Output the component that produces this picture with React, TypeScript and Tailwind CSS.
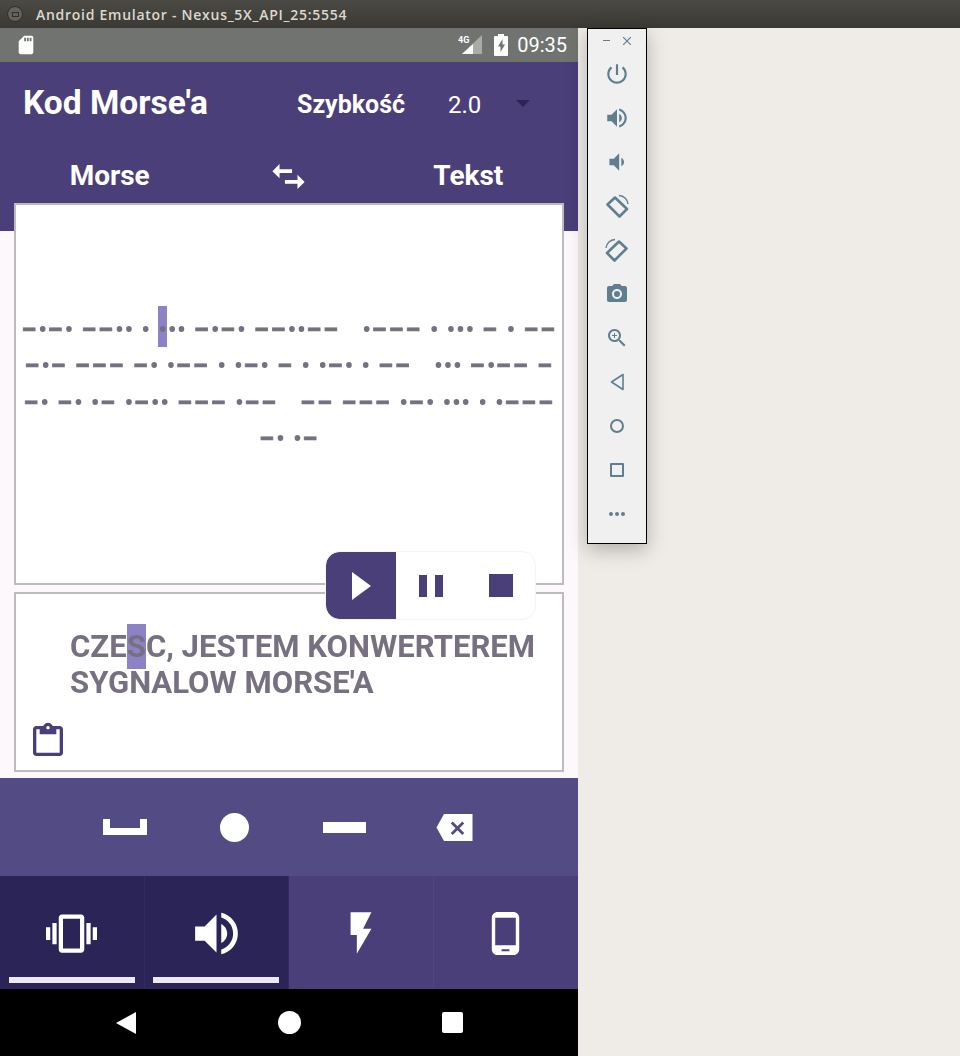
import { FC, Fragment, ReactNode } from 'react'

interface IconProps {
  d: string
  className?: string
}

const Icon: FC<IconProps> = ({ d, className }) => (
  <svg viewBox="0 0 24 24" className={className} fill="currentColor">
    <path d={d} />
  </svg>
)

const paths = {
  sd: 'M18 2h-8L4.02 8 4 20c0 1.1.9 2 2 2h12c1.1 0 2-.9 2-2V4c0-1.1-.9-2-2-2zm-6 6h-2V4h2v4zm3 0h-2V4h2v4zm3 0h-2V4h2v4z',
  swap: 'M7 5L3 9l4 4v-3h7V8H7V5zM21 15l-4-4v3h-7v2h7v3l4-4z',
  clipboard:
    'M19 3h-4.18C14.4 1.84 13.3 1 12 1c-1.3 0-2.4.84-2.82 2H5c-1.1 0-2 .9-2 2v14c0 1.1.9 2 2 2h14c1.1 0 2-.9 2-2V5c0-1.1-.9-2-2-2zm-7 0c.55 0 1 .45 1 1s-.45 1-1 1-1-.45-1-1 .45-1 1-1zm7 16H5V5h2v3h10V5h2v14z',
  vibration:
    'M0 15h2V9H0v6zm3 2h2V7H3v10zm19-8v6h2V9h-2zm-3 8h2V7h-2v10zM16.5 3h-9C6.67 3 6 3.67 6 4.5v15c0 .83.67 1.5 1.5 1.5h9c.83 0 1.5-.67 1.5-1.5v-15c0-.83-.67-1.5-1.5-1.5zM16 19H8V5h8v14z',
  volume:
    'M3 9v6h4l5 5V4L7 9H3zm13.5 3c0-1.77-1.02-3.29-2.5-4.03v8.05c1.48-.73 2.5-2.25 2.5-4.02zM14 3.23v2.06c2.89.86 5 3.54 5 6.71s-2.11 5.85-5 6.71v2.06c4.01-.91 7-4.49 7-8.77s-2.99-7.86-7-8.77z',
  volumeDown:
    'M18.5 12c0-1.77-1.02-3.29-2.5-4.03v8.05c1.48-.73 2.5-2.25 2.5-4.02zM5 9v6h4l5 5V4L9 9H5z',
  flash: 'M7 2v11h3v9l7-12h-4l4-8z',
  phone:
    'M16 1H8C6.34 1 5 2.34 5 4v16c0 1.66 1.34 3 3 3h8c1.66 0 3-1.34 3-3V4c0-1.66-1.34-3-3-3zm-2 20h-4v-1h4v1zm3.25-3H6.75V4h10.5v14z',
  power:
    'M13 3h-2v10h2V3zm4.83 2.17l-1.42 1.42C17.99 7.86 19 9.81 19 12c0 3.87-3.13 7-7 7s-7-3.13-7-7c0-2.19 1.01-4.14 2.58-5.42L6.17 5.17C4.23 6.82 3 9.26 3 12c0 4.97 4.03 9 9 9s9-4.03 9-9c0-2.74-1.23-5.18-3.17-6.83z',
  camera:
    'M9 2L7.17 4H4c-1.1 0-2 .9-2 2v12c0 1.1.9 2 2 2h16c1.1 0 2-.9 2-2V6c0-1.1-.9-2-2-2h-3.17L15 2H9zm3 15c-2.76 0-5-2.24-5-5s2.24-5 5-5 5 2.24 5 5-2.24 5-5 5zm0-2a3 3 0 100-6 3 3 0 000 6z',
  zoom:
    'M15.5 14h-.79l-.28-.27C15.41 12.59 16 11.11 16 9.5 16 5.91 13.09 3 9.5 3S3 5.91 3 9.5 5.91 16 9.5 16c1.61 0 3.09-.59 4.23-1.57l.27.28v.79l5 4.99L20.49 19l-4.99-5zm-6 0C7.01 14 5 11.99 5 9.5S7.01 5 9.5 5 14 7.01 14 9.5 11.99 14 9.5 14zM12 10h-2v2H9v-2H7V9h2V7h1v2h2v1z',
}

const Highlight: FC<{ className?: string; children: ReactNode }> = ({ className = 'py-[4px]', children }) => (
  <span className={`bg-[#8d82c6] ${className}`}>{children}</span>
)

// minus runs get a stroke so they come out as thick as the dots, dots stay regular weight
const Morse: FC<{ text: string }> = ({ text }) => (
  <>
    {text.split(/(−+)/).map((part, i) =>
      part.startsWith('−') ? (
        <span
          key={i}
          className="font-bold tracking-[1.3px] [-webkit-text-stroke:0.8px_#767080]"
        >
          {part}
        </span>
      ) : (
        <Fragment key={i}>{part}</Fragment>
      )
    )}
  </>
)

const MorseRow: FC<{ children: ReactNode }> = ({ children }) => (
  <p className="whitespace-pre text-center text-[28px] font-normal leading-[36.4px] text-[#767080] [word-spacing:0.45px] [will-change:transform]">
    {children}
  </p>
)

const ToolIcon: FC<{ d: string; size?: string }> = ({ d, size = 'h-[24px] w-[24px]' }) => (
  <div className="flex h-[44px] items-center justify-center text-[#5f7f8f]">
    <Icon d={d} className={size} />
  </div>
)

const RotateIcon: FC<{ className?: string }> = ({ className }) => (
  <div className="flex h-[44px] items-center justify-center text-[#5f7f8f]">
    <svg viewBox="0 0 24 24" className={`h-[24px] w-[24px] ${className ?? ''}`} fill="none" stroke="currentColor">
      <path d="M2.5 10.5L10 3.5l12 11.5-7.5 7.5z" strokeWidth="2.6" strokeLinejoin="round" />
      <path d="M14 1.5a9.5 9.5 0 019 8.5" strokeWidth="1.4" />
    </svg>
  </div>
)

const Tab: FC<{ active?: boolean; children: ReactNode }> = ({ active, children }) => (
  <div
    className={`flex flex-col items-center border-r last:border-r-0 ${active ? 'border-[#322b5e] bg-[#2b2557]' : 'border-[#51477f] bg-[#4a3f78]'}`}
  >
    <div className="flex h-[101px] w-full items-center justify-center pt-[13px] text-white">
      {children}
    </div>
    <div className={`h-[6px] w-[126px] ${active ? 'bg-[#eee8f4]' : ''}`} />
  </div>
)

export default function App() {
  return (
    <div className="h-[1056px] w-[960px] overflow-hidden bg-[#efebe6] font-[Roboto,sans-serif]">
      {/* window title bar */}
      <div className="flex h-[28px] items-center bg-gradient-to-b from-[#4b4a45] to-[#3a3934] pl-[7px]">
        <div className="flex h-[16px] w-[16px] items-center justify-center rounded-full border border-[#2f2e2a] bg-[#64625d]">
          <div className="h-[5px] w-[7px] border border-[#2f2e2a]" />
        </div>
        <span className="ml-[13px] font-['Open_Sans',sans-serif] text-[14px] font-semibold tracking-[0.73px] text-[#dcd8cf]">
          Android Emulator - Nexus_5X_API_25:5554
        </span>
      </div>

      <div className="flex">
        {/* phone screen */}
        <div className="flex h-[1028px] w-[578px] flex-col bg-[#fdf8fc]">
          <div className="flex h-[34px] items-center bg-[#70736f] pl-[15px] pr-[11px] text-white">
            <Icon d={paths.sd} className="h-[24px] w-[22px]" />
            <div className="ml-auto flex items-center">
              <svg viewBox="0 0 26 22" className="h-[22px] w-[26px]">
                <path d="M24 1v19H4z" fill="#a9aba8" />
                <path d="M15 10v10H4z" fill="#ffffff" />
                <text x="0" y="9" fontSize="9" fontWeight="700" fill="#ffffff">4G</text>
              </svg>
              <svg viewBox="0 0 14 22" className="ml-[10px] h-[22px] w-[14px]" fill="#ffffff">
                <path
                  fillRule="evenodd"
                  d="M4 0h6v2h3a1 1 0 011 1v18a1 1 0 01-1 1H1a1 1 0 01-1-1V3a1 1 0 011-1h3V0zm4.5 5L4 12.5h2.5V18l4.5-7.5H8.5V5z"
                />
              </svg>
              <span className="ml-[9px] text-[20px] leading-none">09:35</span>
            </div>
          </div>

          {/* header */}
          <div className="h-[169px] shrink-0 bg-[#4a3f78] text-white">
            <div className="flex h-[82px] items-center pl-[23px]">
              <h1 className="w-[274px] text-[33.5px] font-bold">Kod Morse'a</h1>
              <span className="w-[151px] pt-[4px] text-[25px] font-bold">Szybkość</span>
              <span className="w-[68px] pt-[4px] text-[24px]">2.0</span>
              <div className="h-0 w-0 border-x-[7px] border-t-[7px] border-x-transparent border-t-[#2b2557]" />
            </div>
            <div className="grid grid-cols-3 px-[20px] pt-[2px]">
              <span className="text-center text-[28px] font-bold leading-[60px]">Morse</span>
              <div className="flex items-center justify-center">
                <Icon d={paths.swap} className="h-[43px] w-[43px]" />
              </div>
              <span className="text-center text-[28px] font-bold leading-[60px]">Tekst</span>
            </div>
          </div>

          {/* morse panel */}
          <div className="relative mx-[14px] -mt-[28px] h-[382px] shrink-0 border-2 border-[#bdbbc0] bg-white pt-[107px]">
            <MorseRow>
              <Morse text="−•−• −−•• • " />
              <Highlight className="pb-[1px] pt-[7px]">•</Highlight>
              <Morse text="•• −•−• −−••−−   •−−− • ••• − • −−" />
            </MorseRow>
            <MorseRow>
              <Morse text="−•− −−− −• •−− • •−• − • •−• • −−   ••• −•−− −" />
            </MorseRow>
            <MorseRow>
              <Morse text="−• −• •− •−•• −−− •−−   −− −−− •−• ••• • •−−−" />
            </MorseRow>
            <MorseRow>
              <Morse text="−• •−" />
            </MorseRow>
          </div>

          {/* text panel */}
          <div className="relative mx-[14px] mt-[7px] h-[180px] shrink-0 border-2 border-[#bdbbc0] bg-white pl-[54px] pt-[35px]">
            <p className="text-[31.1px] font-bold leading-[36.4px] text-[#767080] [will-change:transform]">
              CZE<Highlight>S</Highlight>C, JESTEM KONWERTEREM
              <br />
              SYGNALOW MORSE'A
            </p>
            <Icon d={paths.clipboard} className="absolute bottom-[9px] left-[12px] h-[40px] w-[40px] text-[#4a3f78]" />
          </div>

          {/* player controls */}
          <div className="relative z-10 h-0">
            <div className="absolute left-[325px] top-[-221px] flex h-[69px] w-[211px] overflow-hidden rounded-[14px] border border-[#f6f3f7] bg-white text-[#4a3f78]">
              <div className="flex w-[70px] items-center justify-center rounded-l-[14px] bg-[#4a3f78] text-white">
                <div className="h-0 w-0 border-y-[14px] border-l-[19px] border-y-transparent border-l-white" />
              </div>
              <div className="flex flex-1 items-center justify-center gap-[8px]">
                <div className="h-[22px] w-[8px] bg-[#4a3f78]" />
                <div className="h-[22px] w-[8px] bg-[#4a3f78]" />
              </div>
              <div className="flex w-[70px] items-center justify-center pl-[2px]">
                <div className="h-[23px] w-[24px] bg-[#4a3f78]" />
              </div>
            </div>
          </div>

          {/* keypad */}
          <div className="mt-[6px] flex h-[98px] shrink-0 items-center bg-[#534c84] pl-[103px] text-white">
            <div className="h-[16px] w-[44px] border-x-[7px] border-b-[7px] border-white" />
            <div className="ml-[73px] h-[29px] w-[29px] rounded-full bg-white" />
            <div className="ml-[74px] h-[11px] w-[43px] bg-white" />
            <svg viewBox="0 0 24 18" className="ml-[70px] h-[27px] w-[37px]" fill="currentColor">
              <path
                fillRule="evenodd"
                d="M24 0H5L0 9l5 9h19V0zm-5.5 12.7L17.2 14 14 10.8 10.8 14l-1.3-1.3L12.7 9.5 9.5 6.3 10.8 5 14 8.2 17.2 5l1.3 1.3-3.2 3.2 3.2 3.2z"
              />
            </svg>
          </div>

          {/* output tabs */}
          <div className="grid h-[113px] shrink-0 grid-cols-4">
            <Tab active>
              <Icon d={paths.vibration} className="h-[51px] w-[51px]" />
            </Tab>
            <Tab active>
              <Icon d={paths.volume} className="h-[57px] w-[57px]" />
            </Tab>
            <Tab>
              <Icon d={paths.flash} className="h-[50px] w-[50px]" />
            </Tab>
            <Tab>
              <Icon d={paths.phone} className="h-[47px] w-[47px]" />
            </Tab>
          </div>

          {/* android nav bar */}
          <div className="relative flex h-[67px] shrink-0 items-center bg-black">
            <div className="ml-[116px] h-0 w-0 border-y-[11px] border-r-[20px] border-y-transparent border-r-white" />
            <div className="ml-[142px] h-[23px] w-[23px] rounded-full bg-white" />
            <div className="ml-[141px] h-[21px] w-[21px] rounded-[2px] bg-white" />
          </div>
        </div>

        {/* emulator side toolbar */}
        <div className="ml-[9px] h-[516px] w-[60px] border border-black bg-[#f0f0f0] shadow-[0_6px_18px_rgba(0,0,0,0.25)]">
          <div className="flex h-[23px] items-center justify-center gap-[13px] text-[#5f7f8f]">
            <div className="h-[1px] w-[7px] bg-[#5f7f8f]" />
            <svg viewBox="0 0 8 8" className="h-[8px] w-[8px]" stroke="currentColor" strokeWidth="1.2">
              <path d="M0 0l8 8M8 0L0 8" />
            </svg>
          </div>
          <ToolIcon d={paths.power} size="h-[26px] w-[26px]" />
          <ToolIcon d={paths.volume} size="h-[26px] w-[26px]" />
          <ToolIcon d={paths.volumeDown} size="h-[26px] w-[26px]" />
          <RotateIcon />
          <RotateIcon className="scale-x-[-1]" />
          <ToolIcon d={paths.camera} />
          <ToolIcon d={paths.zoom} />
          <div className="flex h-[44px] items-center justify-center text-[#5f7f8f]">
            <svg viewBox="0 0 14 18" className="h-[18px] w-[14px]" fill="none" stroke="currentColor" strokeWidth="1.6">
              <path d="M13 1.5v15L1.5 9z" strokeLinejoin="round" />
            </svg>
          </div>
          <div className="flex h-[44px] items-center justify-center">
            <div className="h-[14px] w-[14px] rounded-full border-2 border-[#5f7f8f]" />
          </div>
          <div className="flex h-[44px] items-center justify-center">
            <div className="h-[14px] w-[14px] rounded-[1px] border-2 border-[#5f7f8f]" />
          </div>
          <div className="flex h-[44px] items-center justify-center gap-[2px]">
            <div className="h-[4px] w-[4px] rounded-full bg-[#5f7f8f]" />
            <div className="h-[4px] w-[4px] rounded-full bg-[#5f7f8f]" />
            <div className="h-[4px] w-[4px] rounded-full bg-[#5f7f8f]" />
          </div>
        </div>
      </div>
    </div>
  )
}
